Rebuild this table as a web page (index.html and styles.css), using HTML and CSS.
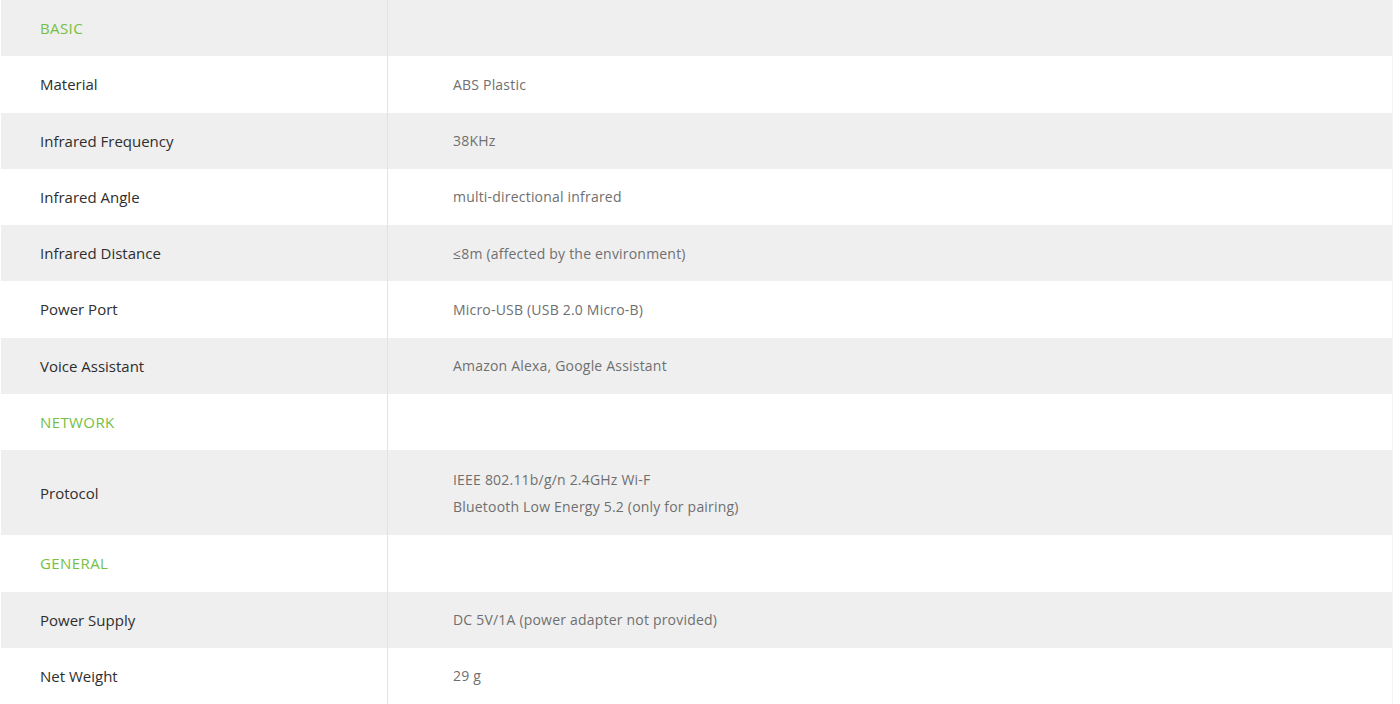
FILE: index.html
```html
<!DOCTYPE html>
<html lang="en">
<head>
<meta charset="utf-8">
<title>Specifications</title>
<link rel="stylesheet" href="styles.css">
</head>
<body>
<table class="spec">
  <tbody>
    <tr class="row gray section"><td class="label">BASIC</td><td class="value"></td></tr>
    <tr class="row"><td class="label">Material</td><td class="value">ABS Plastic</td></tr>
    <tr class="row gray"><td class="label">Infrared Frequency</td><td class="value">38KHz</td></tr>
    <tr class="row"><td class="label">Infrared Angle</td><td class="value">multi-directional infrared</td></tr>
    <tr class="row gray"><td class="label">Infrared Distance</td><td class="value">≤8m (affected by the environment)</td></tr>
    <tr class="row"><td class="label">Power Port</td><td class="value">Micro-USB (USB 2.0 Micro-B)</td></tr>
    <tr class="row gray"><td class="label">Voice Assistant</td><td class="value">Amazon Alexa, Google Assistant</td></tr>
    <tr class="row section"><td class="label">NETWORK</td><td class="value"></td></tr>
    <tr class="row gray tall"><td class="label">Protocol</td><td class="value">IEEE 802.11b/g/n 2.4GHz Wi-F<br>Bluetooth Low Energy 5.2 (only for pairing)</td></tr>
    <tr class="row section"><td class="label">GENERAL</td><td class="value"></td></tr>
    <tr class="row gray"><td class="label">Power Supply</td><td class="value">DC 5V/1A (power adapter not provided)</td></tr>
    <tr class="row"><td class="label">Net Weight</td><td class="value">29 g</td></tr>
  </tbody>
</table>
</body>
</html>
```
FILE: styles.css
```css
html, body {
  margin: 0;
  padding: 0;
  background: #ffffff;
}
body {
  font-family: "Open Sans", Lato, "Liberation Sans", sans-serif;
  padding-left: 1px;
}
.spec {
  width: 1392px;
  border-collapse: collapse;
  border-spacing: 0;
  border-right: 1px solid #f4f4f4;
}
.row {
  height: 56.25px;
}
.row.tall {
  height: 85.25px;
}
.row.gray {
  background: #efefef;
}
.label {
  width: 347px;
  padding: 0 0 0 39px;
  border-right: 1px solid #e3e3e3;
  font-size: 15px;
  color: #2e2e2e;
  vertical-align: middle;
}
.value {
  padding: 0 0 0 65px;
  font-size: 14px;
  line-height: 27px;
  color: #6f6f6f;
  vertical-align: middle;
  letter-spacing: 0.2px;
}
.section .label {
  color: #75c043;
  letter-spacing: 0.4px;
}
```
